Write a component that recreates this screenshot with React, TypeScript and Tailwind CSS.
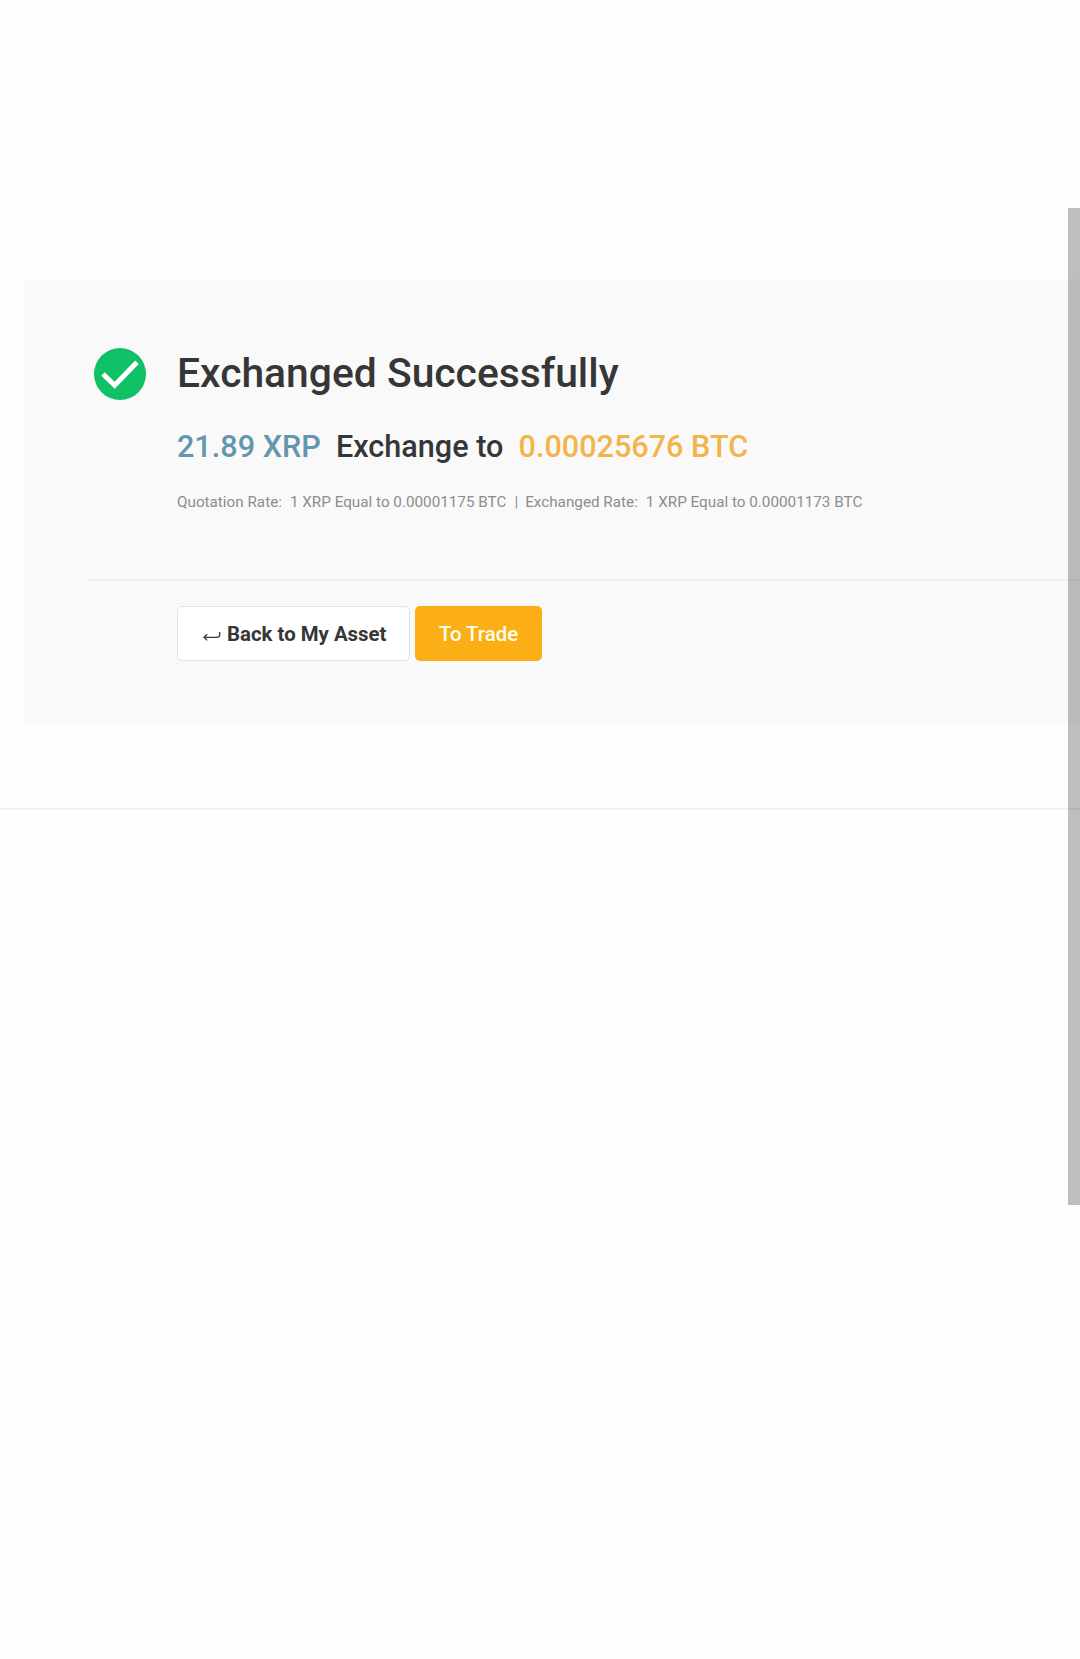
export default function App() {
  return (
    <div className="relative h-[1659px] w-full overflow-hidden bg-[#fefefe] pt-[279px] font-['Roboto',sans-serif] text-[#363636]">
      <main className="ml-[24.4px] h-[445px] bg-[#f9f9f9] pl-[63.6px] pt-[65px]">
        <div className="flex h-[235px]">
          <svg className="mt-1 ml-[6px] size-[52px] shrink-0" viewBox="0 0 52 52" fill="none">
            <circle cx="26" cy="26" r="26" fill="#10c168" />
            <path d="M9 26L20.7 37.2L43 14.3" stroke="#fff" strokeWidth="5" />
          </svg>
          <div className="ml-[31px] whitespace-nowrap">
            <h1 className="h-[50px] text-[40.8px] leading-[58px] font-medium">Exchanged Successfully</h1>
            <p className="mt-[35px] flex h-9 gap-[15.2px] text-[30.6px] leading-9 font-medium">
              <span className="text-[#6297ae]">21.89 XRP</span>
              <span>Exchange to</span>
              <span className="text-[#f3b44b]">0.00025676 BTC</span>
            </p>
            <p className="mt-[25px] flex text-[15.25px] leading-6 text-[#8d8d8d]">
              <span>Quotation Rate:</span>
              <span className="ml-2">1 XRP Equal to 0.00001175 BTC</span>
              <span className="mr-[7px] ml-2">|</span>
              <span>Exchanged Rate:</span>
              <span className="ml-2">1 XRP Equal to 0.00001173 BTC</span>
            </p>
          </div>
        </div>
        <div className="flex gap-[4.5px] border-t-2 border-[#efefef] pt-[25px] pl-[89px]">
          <button className="flex h-[55px] w-[233.5px] items-center rounded-[5px] border-[1.5px] border-[#e1e2e6] bg-white pt-0.5 pl-[25px] text-[20.4px] font-bold whitespace-nowrap">
            <svg className="mt-[4px] mr-[6px] h-3 w-[18px] shrink-0" viewBox="0 0 18 12" fill="none" stroke="#363636" strokeWidth="1.3">
              <path d="M4.2 3.2L1 6.3L4.2 9.4M1 6.3H14Q16.7 6.3 16.7 3.8V1" />
            </svg>
            Back to My Asset
          </button>
          <button className="h-[55px] w-[127px] rounded-[5px] bg-[#fcae17] pt-0.5 text-[20.4px] font-medium text-[#fffeef]">
            To Trade
          </button>
        </div>
      </main>
      <footer className="mt-[84px] border-t-2 border-[#f1f1f1]" />
      <div className="absolute top-[208px] right-0 h-[997px] w-3 bg-black/25" />
    </div>
  );
}
